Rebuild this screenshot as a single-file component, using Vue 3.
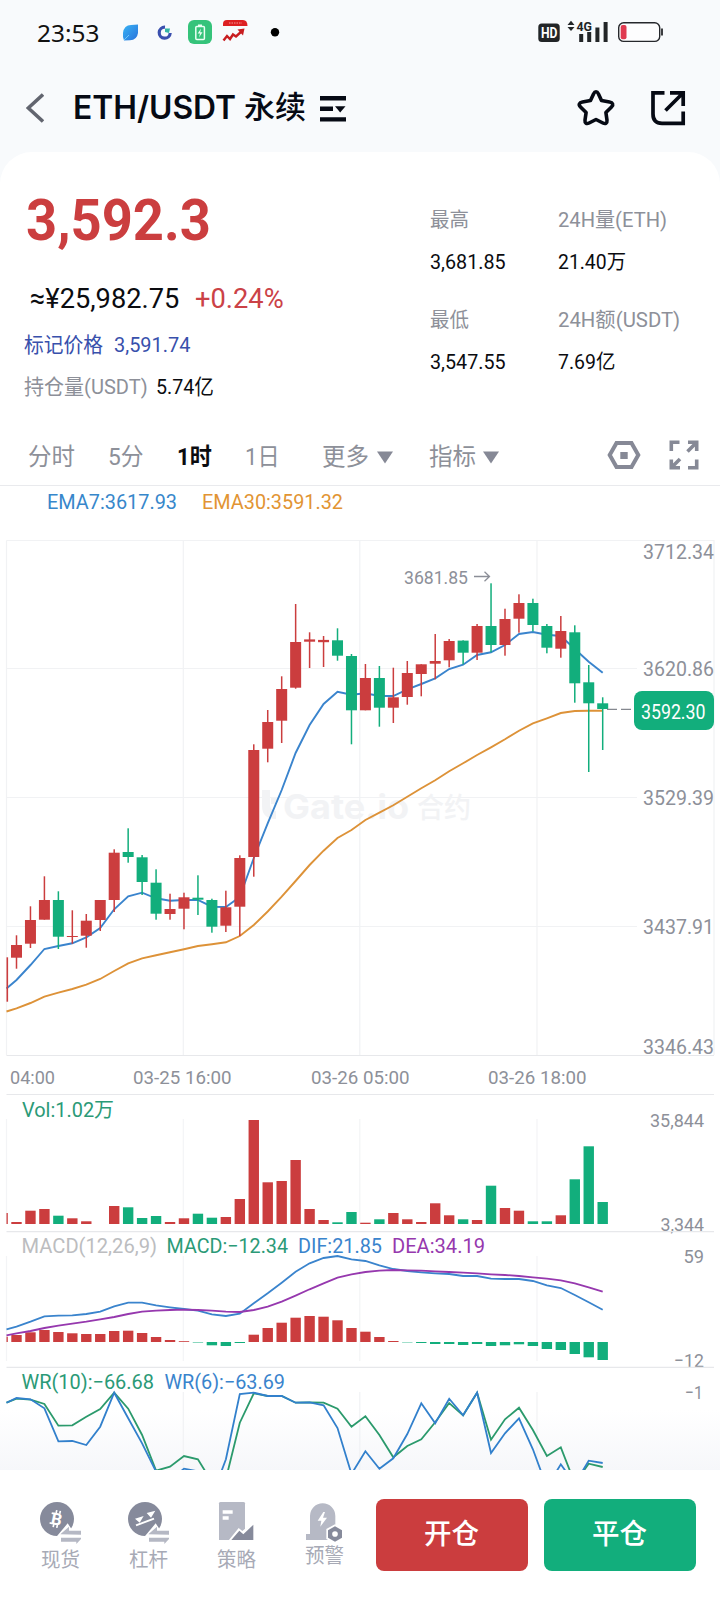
<script setup>
const RED = '#cb3d3e'
const GREEN = '#12ae7c'

// Condenses or widens a label so that it takes exactly the given width.
const vFit = {
  mounted(el, { value }) {
    const natural = el.offsetWidth
    el.style.transform = `scaleX(${value / natural})`
    el.style.marginRight = `${value - natural}px`
  },
}

const cx = (k) => (k === 0 ? 2.6 : 16.5 + 13.957 * (k - 1))

// [direction, high, body top, body bottom, low]
const candles = [
  ['r', 957.3, 957.3, 1001.7, 1001.7], ['r', 935.3, 945, 957.7, 968.7], ['r', 906.3, 920, 943.7, 948],
  ['r', 876.3, 900, 919.7, 919.7], ['g', 891.3, 900, 936.7, 949], ['r', 910.3, 936, 937, 943.7],
  ['r', 914, 920.7, 935.7, 947.7], ['r', 900, 900, 920, 931], ['r', 849.3, 852.7, 900, 912],
  ['g', 828.3, 852, 857, 862.7], ['g', 855, 857.3, 882, 895], ['g', 869.3, 882.7, 913.7, 919.7],
  ['r', 893.7, 909, 914, 919.7], ['r', 892.7, 897.3, 908.7, 929.3], ['g', 875.3, 897.7, 899.7, 915],
  ['g', 898.7, 900, 926.7, 932.7], ['r', 890.7, 907.3, 925.7, 932], ['r', 855.3, 858, 906.7, 936],
  ['r', 744.3, 750, 857, 876.7], ['r', 710, 722, 748.7, 762.3], ['r', 676.3, 689, 720.7, 743],
  ['r', 604, 642, 687.7, 688.7], ['r', 632.3, 639.4, 641.7, 668], ['r', 636, 639.9, 642.2, 667],
  ['g', 628.3, 640.3, 655.7, 660.7], ['g', 654, 656, 710.3, 744.3], ['r', 664, 678, 710.3, 710.3],
  ['g', 666, 678, 707.7, 726.7], ['r', 667.7, 697.3, 707.7, 723], ['r', 661, 673, 697, 704.7],
  ['r', 664.3, 664.3, 674, 696.3], ['r', 634, 661, 663.7, 679.3], ['r', 639, 641, 660.3, 667.3],
  ['g', 640.3, 640.6, 652.7, 664.3], ['r', 624, 626, 652.7, 660], ['g', 583.3, 626, 645, 652.3],
  ['r', 608.7, 619, 645, 655.7], ['r', 594.3, 603, 618.7, 632.7], ['g', 598.7, 603, 625, 631.3],
  ['g', 624, 626, 647.7, 653.3], ['r', 616, 631, 648.7, 657.7], ['g', 625.3, 632.3, 683.3, 702.7],
  ['g', 665, 682.3, 703.3, 772], ['g', 697.3, 703.3, 709, 750],
].map(([d, high, top, bottom, low], k) => ({ k, x: cx(k), color: d === 'r' ? RED : GREEN, high, top, bottom, low }))

const volume = [
  11, 2, 13.3, 15, 8.3, 5.7, 2.7, 0, 18, 16.7, 6, 8, 2, 5.7, 10.3, 6.3, 7, 25, 104, 41.7, 43, 64, 15, 4,
  1.7, 12, 1.3, 4.7, 11, 4.7, 2, 20.7, 8.7, 4.7, 4, 38.3, 16, 13.3, 2.7, 2.7, 8.7, 44.7, 77.7, 22,
]
const macd = [
  5.3, 7, 9.7, 12, 10, 8.7, 8, 8, 11, 11.3, 9, 5, 2, 0.8, -0.5, -3.3, -4, -1, 7.3, 14, 19.3, 24.3, 26,
  25.3, 21.7, 14, 10.3, 5, 1, -0.4, -1, -2, -2, -3, -2, -4, -3.3, -2.3, -4, -7, -8, -12, -15.3, -18,
]
const ema7 = [
  988.5, 980, 965, 949, 946, 943.3, 937.3, 928, 909.3, 896.3, 892.7, 898.3, 900.7, 900, 900, 906.7, 907,
  897, 858, 823.3, 790, 753, 725, 704, 691.7, 694.7, 693.3, 696, 696, 689.3, 684, 678.3, 669, 664.7, 655,
  652.3, 645, 634, 632, 634.7, 636, 649, 661.7, 672.7,
]
const ema30 = [
  1011.5, 1008.3, 1003, 996.7, 992.7, 989, 984.7, 979, 971, 963.3, 958.3, 955.3, 952.3, 949.3, 946, 944.3,
  942.3, 936, 925, 911.5, 896.7, 881, 865, 850.7, 838, 830, 820, 812.7, 805.3, 796.7, 788.3, 780.3, 771.3,
  763.3, 755, 747.3, 739.3, 730.7, 723.3, 718.3, 713, 711, 710.7, 710.7,
]
// Indicator samples, in thirds of a pixel below the panel origin.
const dif = [
  748, 740, 725, 709, 707, 706, 702, 695, 679, 668, 668, 676, 682, 687, 692, 703, 708, 701, 670, 640, 608,
  575, 550, 534, 528, 538, 543, 556, 567, 573, 577, 580, 582, 588, 588, 596, 597, 597, 603, 616, 624, 645,
  667, 689,
]
const dea = [
  766, 760, 753, 744, 737, 731, 725, 718, 711, 702, 695, 692, 690, 689, 690, 692, 695, 696, 690, 680, 665,
  647, 628, 610, 593, 583, 576, 572, 570, 571, 572, 574, 576, 578, 580, 583, 585, 588, 592, 596, 601, 610,
  622, 635,
]
const wr10 = [
  218, 206, 209, 222, 287, 286, 260, 237, 188, 236, 315, 422, 410, 378, 388, 456, 447, 278, 190, 198, 198,
  218, 217, 218, 236, 290, 259, 315, 382, 348, 328, 277, 219, 256, 188, 329, 268, 233, 300, 378, 352, 460,
  401, 411,
]
const wr6 = [
  218, 204, 208, 235, 334, 333, 345, 290, 188, 265, 340, 425, 450, 416, 424, 500, 388, 192, 188, 198, 198,
  218, 217, 226, 294, 432, 364, 416, 385, 312, 220, 280, 206, 256, 188, 369, 310, 265, 358, 472, 403, 462,
  392, 399,
]
const line = (ys, base = 0, div = 1) =>
  ys.map((y, k) => `${(k === 0 ? 6.5 : cx(k)).toFixed(1)},${(base + y / div).toFixed(1)}`).join(' ')

const prices = [
  ['3712.34', 559], ['3620.86', 676], ['3529.39', 805], ['3437.91', 934], ['3346.43', 1054],
]
const times = [
  ['04:00', 10, 45], ['03-25 16:00', 133, 98.5], ['03-26 05:00', 311, 98.5], ['03-26 18:00', 488, 98.5],
]
const columns = [183.3, 359.8, 537]
</script>

<template>
  <div class="phone">
    <header class="status">
      <span v-fit="62" class="clock">23:53</span>
      <svg class="notices" width="170" height="64" viewBox="120 0 170 64">
        <defs>
          <linearGradient id="leaf" x1="0" y1="0" x2="1" y2="1">
            <stop offset="0" stop-color="#38b4f4" /><stop offset="1" stop-color="#2a72dc" />
          </linearGradient>
        </defs>
        <path d="M138 24.500 L138 33 Q137 40 130 40.300 L124 40.500 Q122.500 38 123 33 Q124 25 131 25 Z" fill="url(#leaf)" />
        <path d="M124 40 L129 35" stroke="#6ccafa" stroke-width="1" />
        <path d="M165 27.200 A5.500 5.500 0 1 0 170.200 33" fill="none" stroke="#3a4fae" stroke-width="3.200" />
        <path d="M165 28.500 L170 28.500 L169 33 L165 32 Z" fill="#35b5a5" />
        <rect x="188" y="20" width="24" height="24" rx="6" fill="#35c37a" />
        <rect x="195.800" y="26.500" width="8.600" height="13" rx="1" fill="none" stroke="#eafff3" stroke-width="1.500" />
        <rect x="198" y="24.500" width="4" height="2" fill="#eafff3" />
        <path d="M201 28.500 L197.700 33.600 H200 L199 37.500 L202.500 32.200 H200.200 Z" fill="#eafff3" />
        <path d="M223 26 V24 Q223 20 227 20 H243 Q247.500 20 247.500 26 Z" fill="#dd1f22" />
        <path d="M229 23 H242" stroke="#f49a98" stroke-width="1.200" stroke-dasharray="1.500 1" />
        <path d="M223.500 40.500 L227 36 L230 39 L233 34.500 L236 36.500 L242 31" fill="none" stroke="#c81d20" stroke-width="2.400" />
        <path d="M237.500 29.500 L244.500 28.500 L243 35.500 Z" fill="#c81d20" />
        <circle cx="275" cy="32.200" r="4.200" fill="#000" />
      </svg>
      <svg class="signals" width="135" height="64" viewBox="535 0 135 64">
        <rect x="538.300" y="23.500" width="21.400" height="18.500" rx="3.500" fill="#222527" />
        <text x="541" y="38" textLength="16.500" lengthAdjust="spacingAndGlyphs" class="hd">HD</text>
        <path d="M567.500 25 L571 20.800 L574.500 25 Z M567.500 27 L571 31 L574.500 27 Z" fill="#222527" />
        <text x="576.500" y="31" textLength="15.500" lengthAdjust="spacingAndGlyphs" class="lte">4G</text>
        <path d="M581.200 34 V42 M589.200 32 V42 M597.400 27.500 V42 M605.600 22 V42" stroke="#222527" stroke-width="4" />
        <rect x="618.700" y="22.800" width="41" height="18.600" rx="5" fill="#fdfdfe" stroke="#26282c" stroke-width="1.400" />
        <rect x="620.700" y="25" width="5.800" height="14.200" rx="2" fill="#e03a50" />
        <path d="M662 28.500 V35.500" stroke="#26282c" stroke-width="1.800" />
      </svg>
    </header>

    <nav class="nav">
      <svg width="18" height="34" viewBox="26 91 18 34">
        <path d="M43 94.500 L28.300 108 L43 121.500" fill="none" stroke="#62656f" stroke-width="3.600" />
      </svg>
      <h1 class="pair"><span v-fit="163">ETH/USDT</span></h1>
      <span v-fit="62" class="kind">永续</span>
      <svg class="menu" width="26" height="27" viewBox="320 94 26 27">
        <path d="M320 97.300 H346 M320 107.800 H333 M320 118.400 H346" stroke="#060a14" stroke-width="4.400" />
        <path d="M335 105.300 H345.500 L340.200 111.500 Z" fill="#060a14" />
      </svg>
      <svg class="star" width="42" height="40" viewBox="575 87 42 40">
        <path d="M596 90.800 C597.500 90.800 598 92 598.600 93.200 L601.500 99.600 L609.500 101 C612.800 101.600 613.800 103.700 611.500 105.900 L605.900 111.600 L607 119.200 C607.300 122.200 605.400 123.300 602.900 122 L596 118.500 L589.100 122 C586.600 123.300 584.700 122.200 585 119.200 L586.100 111.600 L580.500 105.900 C578.200 103.700 579.200 101.600 582.500 101 L590.500 99.600 L593.400 93.200 C594 92 594.500 90.800 596 90.800 Z" fill="none" stroke="#060a14" stroke-width="3.600" stroke-linejoin="round" />
      </svg>
      <svg class="share" width="36" height="36" viewBox="650 89 36 36">
        <path d="M664.500 91.800 H653 V113 Q653 122.300 662 122.300 H683.200 V110.500" fill="none" stroke="#060a14" stroke-width="3.700" />
        <path d="M670 91.800 H683.200 V105 M683 92 L665.500 109.500" fill="none" stroke="#060a14" stroke-width="3.700" />
      </svg>
    </nav>

    <main class="card">
      <section class="summary">
        <div class="quote">
          <div class="price"><span v-fit="185">3,592.3</span></div>
          <div class="row fiat">
            <span v-fit="149">≈¥25,982.75</span>
            <span v-fit="89" class="change">+0.24%</span>
          </div>
          <div class="row mark">
            <span v-fit="79">标记价格</span>
            <span v-fit="76" class="num">3,591.74</span>
          </div>
          <div class="row interest">
            <span v-fit="124" class="muted">持仓量(USDT)</span>
            <span v-fit="58" class="num">5.74亿</span>
          </div>
        </div>
        <div class="stats">
          <div class="stat"><span v-fit="39" class="muted">最高</span><span v-fit="76">3,681.85</span></div>
          <div class="stat"><span v-fit="109" class="muted">24H量(ETH)</span><span v-fit="68">21.40万</span></div>
          <div class="stat"><span v-fit="39" class="muted">最低</span><span v-fit="76">3,547.55</span></div>
          <div class="stat"><span v-fit="122" class="muted">24H额(USDT)</span><span v-fit="57">7.69亿</span></div>
        </div>
      </section>

      <section class="tabs">
        <span v-fit="47" class="tab">分时</span>
        <span v-fit="36" class="tab gap-s">5分</span>
        <span v-fit="35" class="tab gap-l active">1时</span>
        <span v-fit="35" class="tab gap-l">1日</span>
        <span v-fit="47" class="tab gap-xl">更多</span>
        <svg class="caret" width="16" height="13" viewBox="0 0 16 13"><path d="M0 .5 H16 L8 12.500 Z" fill="#868996" /></svg>
        <span v-fit="47" class="tab gap-m">指标</span>
        <svg class="caret" width="16" height="13" viewBox="0 0 16 13"><path d="M0 .5 H16 L8 12.500 Z" fill="#868996" /></svg>
        <svg class="settings" width="34" height="30" viewBox="607 440 34 30">
          <path d="M616.500 443 H631.500 L638.300 455 L631.500 467 H616.500 L609.700 455 Z" fill="none" stroke="#868996" stroke-width="4" />
          <rect x="620.300" y="452" width="7.400" height="7" fill="#868996" />
        </svg>
        <svg class="expand" width="30" height="30" viewBox="669.500 440 30 30">
          <path d="M680 442.300 H671.800 V451 M697.200 459.500 V467.700 H688.500 M688.500 442.300 H697.200 V451 M696.500 443 L688 451.500 M671.800 459.500 V467.700 H680.500 M672.500 467 L680.500 459" fill="none" stroke="#868996" stroke-width="3.600" />
        </svg>
      </section>

      <svg class="panel" width="720" height="610" viewBox="0 485 720 610">
        <path d="M0 485.500 H720" stroke="#e9eaed" stroke-width="1.200" />
        <text x="47" y="509" textLength="130" lengthAdjust="spacingAndGlyphs" class="t21" fill="#3787cb">EMA7:3617.93</text>
        <text x="202" y="509" textLength="141" lengthAdjust="spacingAndGlyphs" class="t21" fill="#e29433">EMA30:3591.32</text>
        <g stroke="#f1f2f4" stroke-width="1.200" fill="none">
          <path d="M6.500 540.500 H714 V1055 M6.500 540.500 V1055" />
          <path d="M6.500 668.500 H637 M6.500 797.500 H637 M6.500 926.500 H637" />
          <path v-for="x in columns" :key="x" :d="`M${x} 540.5 V1055.5`" />
        </g>
        <path d="M6.500 1055.500 H714 M6.500 1094.500 H714" stroke="#e7e8eb" stroke-width="1.200" />
        <g fill="#f2f3f5">
          <path d="M262 790 V806 Q262 819 276 819 V811 Q270 811 270 804 V790 Z M271 797 H277 V804 H271 Z" />
          <text x="283" y="819" textLength="126" lengthAdjust="spacingAndGlyphs" class="brand">Gate.io</text>
          <text x="417" y="817.500" textLength="54" lengthAdjust="spacingAndGlyphs" class="brand cn">合约</text>
        </g>
        <polyline :points="line(ema30)" fill="none" stroke="#dd9238" stroke-width="1.900" />
        <polyline :points="line(ema7)" fill="none" stroke="#3a84cd" stroke-width="1.900" />
        <clipPath id="plot"><rect x="6.500" y="540" width="707" height="516" /></clipPath>
        <g v-for="c in candles" :key="c.k" :fill="c.color" clip-path="url(#plot)">
          <rect :x="c.x - 0.75" :y="c.high" width="1.500" :height="c.low - c.high" />
          <rect :x="c.x - 5.5" :y="c.top" width="11" :height="c.bottom - c.top" />
        </g>
        <text x="404" y="583.500" textLength="64" lengthAdjust="spacingAndGlyphs" class="t19 axis">3681.85</text>
        <path d="M474 576.500 H489.500 M484.500 571.800 L489.500 576.500 L484.500 581.200" fill="none" stroke="#8b8e97" stroke-width="1.300" />
        <path d="M607 709.400 H634" stroke="#85888f" stroke-width="1.300" stroke-dasharray="10 4" />
        <text v-for="[p, y] in prices" :key="p" x="643" :y="y" textLength="71" lengthAdjust="spacingAndGlyphs" class="t20 axis">{{ p }}</text>
        <rect x="634" y="691" width="80" height="39" rx="8" fill="#12ae7c" />
        <text x="641" y="718.500" textLength="64.500" lengthAdjust="spacingAndGlyphs" class="t20" fill="#fff">3592.30</text>
        <text v-for="[t, x, w] in times" :key="t" :x="x" y="1083.700" :textLength="w" lengthAdjust="spacingAndGlyphs" class="t19 axis">{{ t }}</text>
      </svg>

      <svg class="panel" width="720" height="136" viewBox="0 1095 720 136">
        <path v-for="x in [6.5, ...columns]" :key="x" :d="`M${x} 1119 V1224`" stroke="#f3f4f6" stroke-width="1.200" />
        <clipPath id="volume"><rect x="6.500" y="1100" width="707" height="131" /></clipPath>
        <g clip-path="url(#volume)">
          <rect v-for="c in candles" :key="c.k" :x="c.x - 5.2" :y="1224 - volume[c.k]" width="10.400" :height="volume[c.k]" :fill="c.color" />
        </g>
        <text x="22" y="1117" textLength="92" lengthAdjust="spacingAndGlyphs" class="t21" fill="#2b9a77">Vol:1.02万</text>
        <text x="650" y="1127" textLength="54" lengthAdjust="spacingAndGlyphs" class="t19 axis">35,844</text>
        <text x="660.500" y="1230.500" textLength="43.500" lengthAdjust="spacingAndGlyphs" class="t19 axis">3,344</text>
      </svg>

      <svg class="panel" width="720" height="136" viewBox="0 1231 720 136">
        <path d="M6.500 1231.600 H714" stroke="#e7e8eb" stroke-width="1.200" />
        <path v-for="x in [6.5, ...columns]" :key="x" :d="`M${x} 1256 V1361`" stroke="#f3f4f6" stroke-width="1.200" />
        <clipPath id="macd"><rect x="6.500" y="1240" width="707" height="127" /></clipPath>
        <g clip-path="url(#macd)">
          <rect v-for="c in candles" :key="c.k" :x="c.x - 5.2" :y="macd[c.k] > 0 ? 1342 - macd[c.k] : 1342" width="10.400" :height="Math.abs(macd[c.k])" :fill="macd[c.k] > 0 ? RED : GREEN" />
        </g>
        <polyline :points="line(dif, 1080, 3)" fill="none" stroke="#3a84cd" stroke-width="1.800" />
        <polyline :points="line(dea, 1080, 3)" fill="none" stroke="#9638ae" stroke-width="1.800" />
        <text x="21.500" y="1252.700" textLength="135.500" lengthAdjust="spacingAndGlyphs" class="t21" fill="#bcbdc0">MACD(12,26,9)</text>
        <text x="166.500" y="1252.700" textLength="121.500" lengthAdjust="spacingAndGlyphs" class="t21" fill="#2b9a77">MACD:−12.34</text>
        <text x="298" y="1252.700" textLength="84" lengthAdjust="spacingAndGlyphs" class="t21" fill="#3a84cd">DIF:21.85</text>
        <text x="392" y="1252.700" textLength="93" lengthAdjust="spacingAndGlyphs" class="t21" fill="#9638ae">DEA:34.19</text>
        <text x="683.500" y="1263" textLength="20.500" lengthAdjust="spacingAndGlyphs" class="t19 axis">59</text>
        <text x="674" y="1366.500" textLength="30" lengthAdjust="spacingAndGlyphs" class="t19 axis">−12</text>
      </svg>

      <svg class="panel" width="720" height="103" viewBox="0 1367 720 103">
        <defs>
          <linearGradient id="fade" x1="0" y1="0" x2="0" y2="1">
            <stop offset="0" stop-color="#f6f7fa" stop-opacity="0" /><stop offset="1" stop-color="#f6f7fa" />
          </linearGradient>
          <clipPath id="wr"><rect x="6" y="1367" width="714" height="103" /></clipPath>
        </defs>
        <rect x="0" y="1410" width="720" height="60" fill="url(#fade)" />
        <path d="M6.500 1367.400 H714" stroke="#e7e8eb" stroke-width="1.200" />
        <path v-for="x in columns" :key="x" :d="`M${x} 1392 V1470`" stroke="#f1f2f4" stroke-width="1.200" />
        <g clip-path="url(#wr)" fill="none" stroke-width="1.800">
          <polyline :points="line(wr10, 1330, 3)" stroke="#2b9a6c" />
          <polyline :points="line(wr6, 1330, 3)" stroke="#3280cc" />
        </g>
        <text x="21.500" y="1388.700" textLength="132.500" lengthAdjust="spacingAndGlyphs" class="t21" fill="#2b9a77">WR(10):−66.68</text>
        <text x="164.500" y="1388.700" textLength="120.500" lengthAdjust="spacingAndGlyphs" class="t21" fill="#3a84cd">WR(6):−63.69</text>
        <text x="685" y="1399" textLength="18" lengthAdjust="spacingAndGlyphs" class="t19 axis">−1</text>
      </svg>
    </main>

    <footer class="dock">
      <div class="item">
        <svg width="44" height="45" viewBox="114 507 132 135">
          <circle cx="171" cy="567" r="51" fill="#868a9b" />
          <g transform="rotate(12 171 566)">
            <text x="154" y="585" class="coin">B</text>
            <path d="M165 541 V550 M176 541 V550 M165 584 V593 M176 584 V593 M152 553 H160 M152 583 H160" stroke="#fff" stroke-width="5" />
          </g>
          <path d="M168 622 L203 580 L214 596 H250 V642 H175 Z" fill="#fff" />
          <path d="M181 613 L207 590 V602 H243 V614 Z M243 623 V627 L229 642 V635 H183 V623 Z" fill="#b5b8c4" />
        </svg>
        <span v-fit="39">现货</span>
      </div>
      <div class="item">
        <svg width="44" height="45" viewBox="378 507 132 135">
          <circle cx="435" cy="567" r="51" fill="#868a9b" />
          <path d="M405 566 L431 558 L419 578 Z M440 549 L466 542 L453 563 Z" fill="#fff" />
          <path d="M408 586 L462 566" stroke="#fff" stroke-width="6" />
          <path d="M432 622 L467 580 L478 596 H514 V642 H439 Z" fill="#fff" />
          <path d="M445 613 L471 590 V602 H507 V614 Z M507 623 V627 L493 642 V635 H447 V623 Z" fill="#b5b8c4" />
        </svg>
        <span v-fit="39">杠杆</span>
      </div>
      <div class="item">
        <svg width="44" height="45" viewBox="642 507 132 135">
          <path d="M657 520 Q657 516 662 516 H730 Q735 516 735 520 V630 H657 Z" fill="#b6b9c5" />
          <path d="M668 546 H698 M668 564 H686" stroke="#fff" stroke-width="10" />
          <path d="M682 636 L716 594 L727 603 L764 573 V636 Z" fill="#fff" />
          <path d="M694 630 L718 602 L730 613 L760 584 V630 Z" fill="#868a9b" />
        </svg>
        <span v-fit="39">策略</span>
      </div>
      <div class="item raised">
        <svg width="44" height="45" viewBox="906 507 132 135">
          <path d="M930 612 V558 A38 38 0 0 1 1006 558 V612 H990 V630 H918 V612 Z" fill="#b6b9c5" />
          <path d="M970 546 L953 572 H964 L961 590 L981 563 H969 L975 546 Z" fill="#fff" />
          <path d="M1005 583 L1031 597 V627 L1005 641 L979 627 V597 Z" fill="#fff" />
          <path d="M1005 589 L1026 601 V623 L1005 635 L984 623 V601 Z" fill="#868a9b" />
          <circle cx="1005" cy="612" r="8.500" fill="#fff" />
        </svg>
        <span v-fit="39">预警</span>
      </div>
      <button class="open"><span v-fit="55">开仓</span></button>
      <button class="close"><span v-fit="55">平仓</span></button>
    </footer>
  </div>
</template>

<style>
body {
  margin: 0;
  background: #f8fafc;
}
</style>

<style scoped>
.phone {
  width: 720px;
  height: 1600px;
  overflow: hidden;
  background: #f8fafc;
  font-family: Roboto, "Noto Sans CJK SC", sans-serif;
  color: #0b0c10;
}
svg {
  display: block;
  flex: none;
}
.panel {
  overflow: visible;
}
span {
  display: inline-block;
  flex: none;
  white-space: nowrap;
  transform-origin: 0 50%;
}
.status {
  display: flex;
  height: 64px;
}
.clock {
  margin-left: 36.500px;
  font: 400 24px/65px "Noto Sans", Roboto, sans-serif;
  color: #111;
}
.notices {
  margin-left: 21.500px;
}
.signals {
  margin-left: auto;
  margin-right: 50px;
}
.hd {
  font: 700 14.500px Roboto, sans-serif;
  fill: #fff;
}
.lte {
  font: 700 13.500px Roboto, sans-serif;
  fill: #222527;
}
.nav {
  display: flex;
  align-items: center;
  height: 88px;
  padding-left: 26px;
}
.pair {
  margin: 0 0 0 28.500px;
  font: 600 32px/90px Inter, sans-serif;
  color: #060a14;
}
.kind {
  margin-left: 8.500px;
  font-size: 31px;
  font-weight: 500;
  line-height: 86px;
  color: #060a14;
}
.menu {
  margin-left: 14px;
}
.star {
  margin-left: auto;
}
.share {
  margin: 0 34px 0 33px;
}
.card {
  height: 1318px;
  border-radius: 32px 32px 0 0;
  background: #fff;
}
.summary {
  display: flex;
  height: 276px;
}
.quote {
  width: 430px;
  padding-top: 38px;
}
.price {
  height: 60px;
  padding-left: 25.500px;
  font-size: 57.500px;
  font-weight: 700;
  line-height: 62px;
  color: #cb3e3f;
}
.row {
  display: flex;
  height: 40px;
  padding-left: 24px;
  font-size: 21px;
  line-height: 41px;
}
.fiat {
  margin-top: 28px;
  padding-left: 30px;
  font-size: 28.500px;
}
.change {
  margin-left: 16px;
  color: #cb4247;
}
.mark {
  margin-top: 6.500px;
  color: #3850ac;
}
.mark .num {
  margin-left: 10.500px;
}
.interest {
  margin-top: 2px;
}
.interest .num {
  margin-left: 8.500px;
}
.muted {
  color: #8d9099;
}
.stats {
  display: grid;
  grid-template-columns: 128px 140px;
  grid-auto-rows: 82px;
  row-gap: 18px;
  padding-top: 48px;
  font-size: 20.500px;
  line-height: 40px;
}
.stat {
  display: flex;
  flex-direction: column;
  align-items: flex-start;
  gap: 2px;
}
.tabs {
  display: flex;
  align-items: center;
  height: 57px;
  padding-left: 28px;
  font-size: 24px;
  line-height: 57px;
  color: #8d9099;
}
.tab {
  padding-top: 2px;
}
.active {
  font-weight: 700;
  color: #0b0c10;
}
.gap-s {
  margin-left: 33px;
}
.gap-l {
  margin-left: 33.300px;
}
.gap-m {
  margin-left: 36px;
}
.gap-xl {
  margin-left: 43px;
}
.caret {
  margin-left: 7.200px;
  margin-top: 2px;
}
.settings {
  margin-left: auto;
  margin-top: -3px;
}
.expand {
  margin: -3px 21.500px 0 28px;
}
.t21 {
  font-size: 20.500px;
}
.t20 {
  font-size: 20.500px;
}
.t19 {
  font-size: 19px;
}
.axis {
  fill: #8d9099;
}
.brand {
  font: 700 34px Inter, sans-serif;
}
.cn {
  font: 500 28px "Noto Sans CJK SC", sans-serif;
}
.dock {
  position: relative;
  display: flex;
  height: 130px;
  padding-left: 16px;
  background: #fff;
}
.item {
  display: flex;
  flex-direction: column;
  align-items: center;
  width: 88px;
  padding-top: 29px;
  font-size: 20px;
  line-height: 28px;
  color: #a7aab6;
}
.item span {
  margin-top: 1.500px;
}
.raised span {
  margin-top: -2.500px;
}
.coin {
  font: 700 50px Roboto, sans-serif;
  fill: #fff;
}
button {
  width: 152px;
  height: 72px;
  margin: 29px 0 0 8px;
  padding: 0;
  border: 0;
  border-radius: 8px;
  font-family: inherit;
  font-size: 28px;
  font-weight: 500;
  line-height: 72px;
  color: #fff;
}
.open {
  background: #cb3d3e;
}
.close {
  margin-left: 16px;
  background: #12ae7c;
}
</style>
